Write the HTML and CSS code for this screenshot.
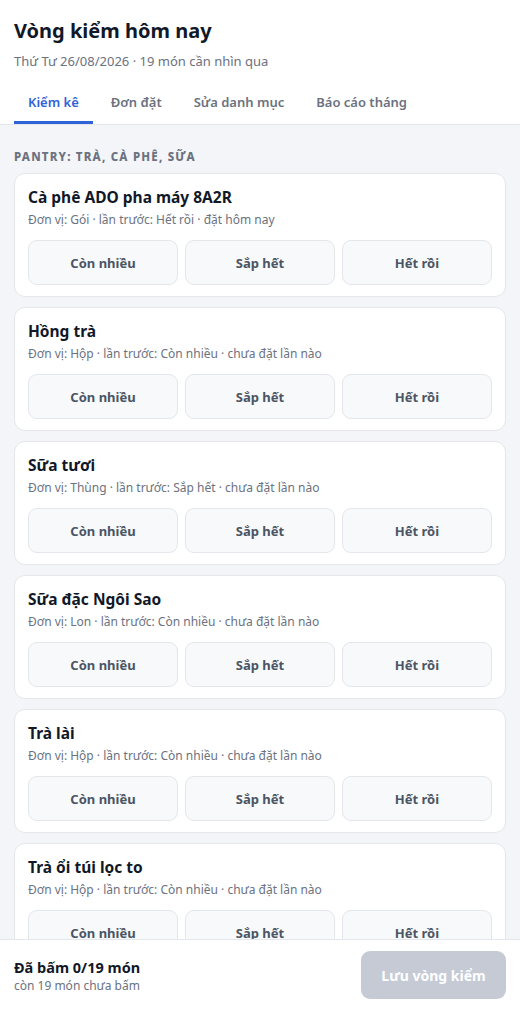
FILE: index.html
```html
<!DOCTYPE html>
<html lang="vi">
<head>
<meta charset="utf-8">
<title>Vòng kiểm hôm nay</title>
<link rel="stylesheet" href="styles.css">
</head>
<body>
<header class="top">
  <h1 class="title">Vòng kiểm hôm nay</h1>
  <p class="sub">Thứ Tư 26/08/2026 · 19 món cần nhìn qua</p>
  <nav class="tabs">
    <a class="tab active">Kiểm kê</a>
    <a class="tab">Đơn đặt</a>
    <a class="tab">Sửa danh mục</a>
    <a class="tab">Báo cáo tháng</a>
  </nav>
</header>
<main class="content">
  <h2 class="section">PANTRY: TRÀ, CÀ PHÊ, SỮA</h2>
  <div class="list">
    <section class="card">
      <h3 class="name">Cà phê ADO pha máy 8A2R</h3>
      <p class="meta">Đơn vị: Gói · lần trước: Hết rồi · đặt hôm nay</p>
      <div class="choices"><button class="choice">Còn nhiều</button><button class="choice">Sắp hết</button><button class="choice">Hết rồi</button></div>
    </section>
    <section class="card">
      <h3 class="name">Hồng trà</h3>
      <p class="meta">Đơn vị: Hộp · lần trước: Còn nhiều · chưa đặt lần nào</p>
      <div class="choices"><button class="choice">Còn nhiều</button><button class="choice">Sắp hết</button><button class="choice">Hết rồi</button></div>
    </section>
    <section class="card">
      <h3 class="name">Sữa tươi</h3>
      <p class="meta">Đơn vị: Thùng · lần trước: Sắp hết · chưa đặt lần nào</p>
      <div class="choices"><button class="choice">Còn nhiều</button><button class="choice">Sắp hết</button><button class="choice">Hết rồi</button></div>
    </section>
    <section class="card">
      <h3 class="name">Sữa đặc Ngôi Sao</h3>
      <p class="meta">Đơn vị: Lon · lần trước: Còn nhiều · chưa đặt lần nào</p>
      <div class="choices"><button class="choice">Còn nhiều</button><button class="choice">Sắp hết</button><button class="choice">Hết rồi</button></div>
    </section>
    <section class="card">
      <h3 class="name">Trà lài</h3>
      <p class="meta">Đơn vị: Hộp · lần trước: Còn nhiều · chưa đặt lần nào</p>
      <div class="choices"><button class="choice">Còn nhiều</button><button class="choice">Sắp hết</button><button class="choice">Hết rồi</button></div>
    </section>
    <section class="card">
      <h3 class="name">Trà ổi túi lọc to</h3>
      <p class="meta">Đơn vị: Hộp · lần trước: Còn nhiều · chưa đặt lần nào</p>
      <div class="choices"><button class="choice">Còn nhiều</button><button class="choice">Sắp hết</button><button class="choice">Hết rồi</button></div>
    </section>
  </div>
</main>
<footer class="bar">
  <div class="count">
    <div class="count-main">Đã bấm 0/19 món</div>
    <div class="count-sub">còn 19 món chưa bấm</div>
  </div>
  <button class="save" disabled>Lưu vòng kiểm</button>
</footer>
</body>
</html>
```
FILE: styles.css
```css
* { box-sizing: border-box; }
html, body { margin: 0; padding: 0; }
body {
  font-family: "Noto Sans", "Open Sans", sans-serif;
  background: #f4f5f8;
  color: #111827;
  height: 1010px;
  overflow: hidden;
}
.top {
  background: #fff;
  padding: 16px 14px 0;
  border-bottom: 1px solid #e3e6ec;
}
.title {
  margin: 0;
  font-size: 20px;
  font-weight: 700;
  line-height: 30px;
  color: #111827;
}
.sub {
  margin: 6px 0 0;
  font-size: 13px;
  line-height: 18px;
  color: #6b7280;
}
.tabs {
  display: flex;
  margin-top: 16px;
}
.tab {
  font-size: 13px;
  font-weight: 600;
  line-height: 19px;
  color: #6b7280;
  padding: 7px 14px 9px;
  border-bottom: 3px solid transparent;
  margin-right: 4px;
}
.tab.active {
  color: #2f63d8;
  border-bottom-color: #2f63d8;
}
.content {
  padding: 24px 14px 90px;
}
.section {
  margin: 0 0 8px;
  font-size: 11.5px;
  font-weight: 800;
  letter-spacing: 1.2px;
  color: #6b7280;
  line-height: 16px;
}
.list {
  display: flex;
  flex-direction: column;
  gap: 10px;
}
.card {
  background: #fff;
  border: 1px solid #e5e7eb;
  border-radius: 11px;
  padding: 12px 13px 11px;
}
.name {
  margin: 0;
  font-size: 15.5px;
  font-weight: 700;
  line-height: 22px;
  color: #111827;
}
.meta {
  margin: 3px 0 0;
  font-size: 12px;
  line-height: 18px;
  color: #6b7280;
}
.choices {
  display: grid;
  grid-template-columns: 1fr 1fr 1fr;
  gap: 7px;
  margin-top: 11px;
}
.choice {
  font-family: inherit;
  height: 45px;
  background: #f8f9fb;
  border: 1px solid #e3e6eb;
  border-radius: 9px;
  font-size: 13px;
  font-weight: 700;
  color: #4b5563;
}
.bar {
  position: fixed;
  left: 0;
  right: 0;
  bottom: 0;
  height: 71px;
  background: #fff;
  border-top: 1px solid #e3e6ec;
  display: flex;
  align-items: center;
  justify-content: space-between;
  padding: 0 14px;
}
.count-main {
  font-size: 14.5px;
  font-weight: 700;
  line-height: 20px;
  color: #111827;
}
.count-sub {
  font-size: 12px;
  line-height: 17px;
  color: #6b7280;
}
.save {
  font-family: inherit;
  width: 145px;
  height: 48px;
  background: #c5cad5;
  color: #fff;
  border: none;
  border-radius: 9px;
  font-size: 14px;
  font-weight: 700;
}
```
